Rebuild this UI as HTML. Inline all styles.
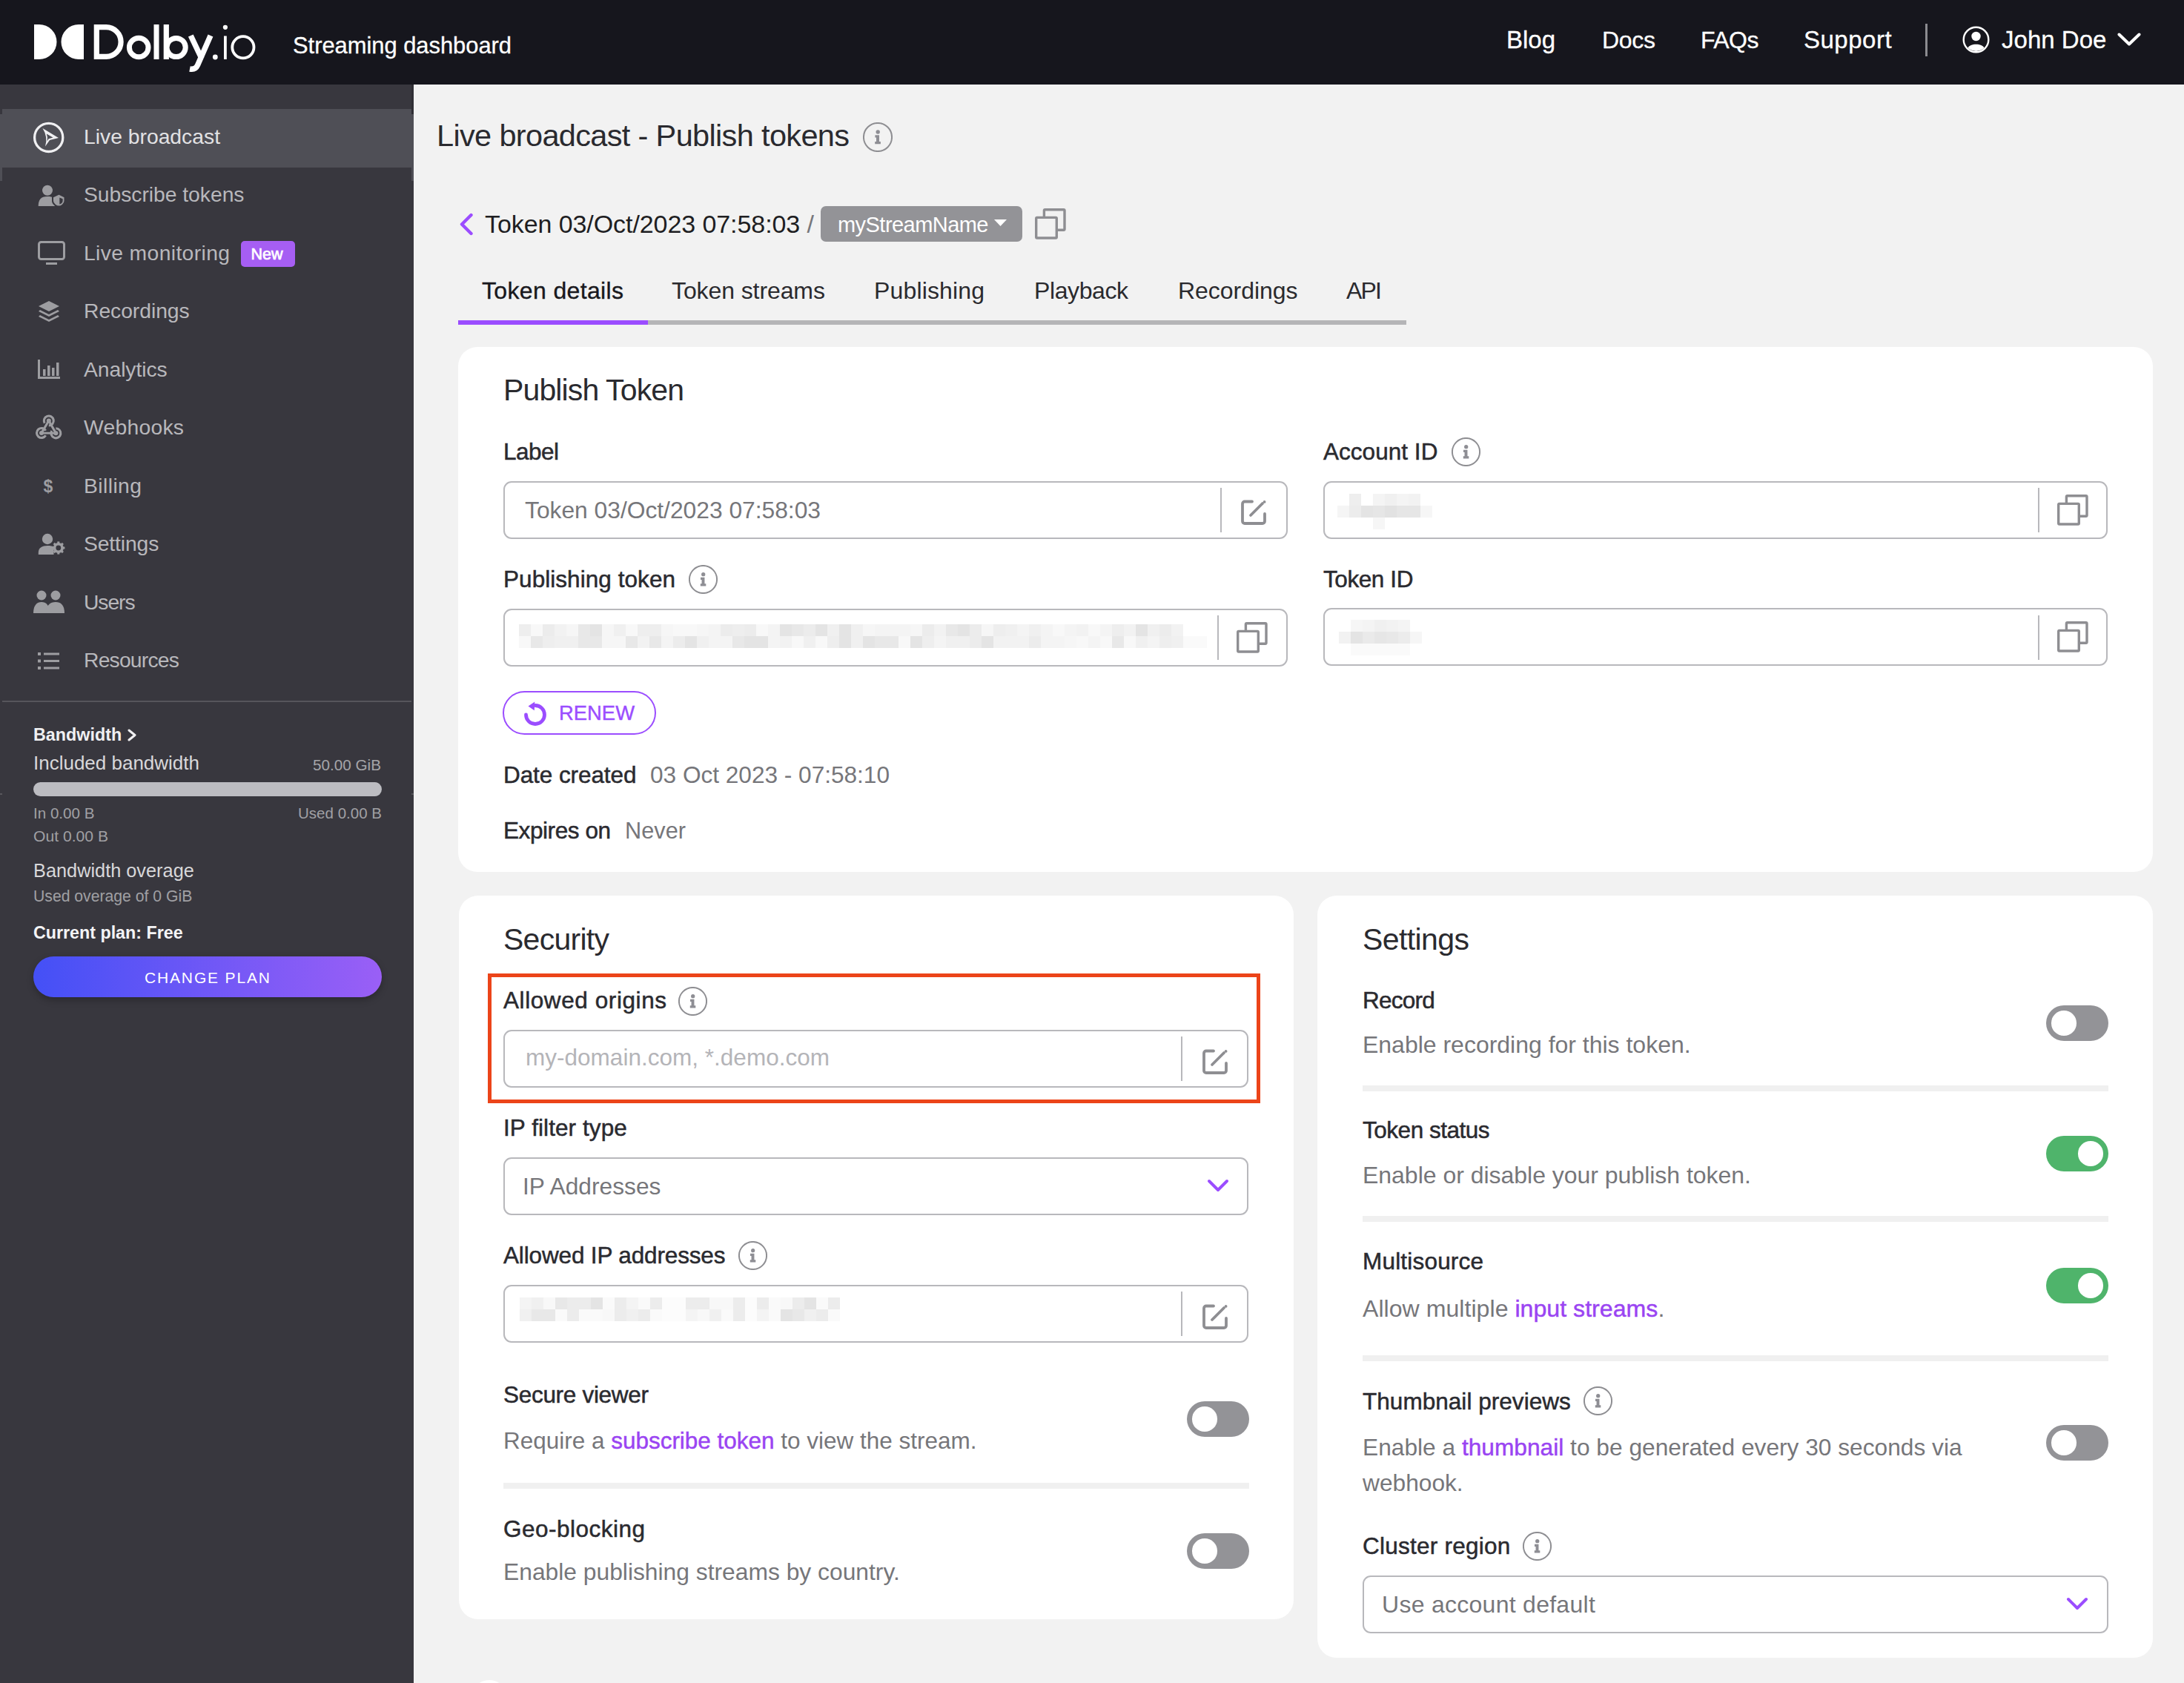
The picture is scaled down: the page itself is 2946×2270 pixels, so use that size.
<!DOCTYPE html>
<html><head><meta charset="utf-8"><title>Dolby.io Streaming dashboard</title>
<style>
html,body{margin:0;padding:0;width:2946px;height:2270px;overflow:hidden;background:#f2f2f2}
body{position:relative;font-family:"Liberation Sans",sans-serif}
body>div{position:absolute}
.t{line-height:1;white-space:pre}
</style></head><body>
<div style="left:0px;top:0px;width:2946px;height:114px;background:#16161d"></div>
<svg style="position:absolute;left:0px;top:0px" width="360" height="114" viewBox="0 0 360 114"><g fill="#fff"><path d="M46 33 H53 A23.5 23.5 0 0 1 53 80 H46 Z"/><path d="M113 33 H106 A23.5 23.5 0 0 0 106 80 H113 Z"/><rect x="207.5" y="33" width="7" height="47"/><rect x="220.7" y="33" width="7.2" height="47"/><circle cx="290.3" cy="77" r="3.4"/><rect x="302" y="48.5" width="3.8" height="31.5"/><circle cx="303.9" cy="36.8" r="3.1"/></g><g fill="none" stroke="#fff"><path d="M130.3 36.6 H143.2 A19.9 19.9 0 0 1 143.2 76.4 H130.3 Z" stroke-width="7.2"/><circle cx="187.2" cy="64" r="12.8" stroke-width="7"/><circle cx="237.6" cy="64" r="12.6" stroke-width="7"/><path d="M257.3 48 L272 79" stroke-width="7.4"/><path d="M284 48 L266.5 88 Q263.5 94.5 256 93" stroke-width="7.4"/><circle cx="327.9" cy="63.8" r="14.6" stroke-width="3.8"/></g></svg>
<div class="t" style="left:395px;top:46.64px;font-size:30.9px;color:#fff;font-weight:400;letter-spacing:-0.021px;-webkit-text-stroke:0.3px #fff">Streaming dashboard</div>
<div class="t" style="left:2032px;top:37.17px;font-size:33px;color:#fff;font-weight:400;letter-spacing:-0.021px;-webkit-text-stroke:0.3px #fff">Blog</div>
<div class="t" style="left:2161px;top:38.01px;font-size:32px;color:#fff;font-weight:400;letter-spacing:-0.302px;-webkit-text-stroke:0.3px #fff">Docs</div>
<div class="t" style="left:2294px;top:38.01px;font-size:32px;color:#fff;font-weight:400;letter-spacing:-0.539px;-webkit-text-stroke:0.3px #fff">FAQs</div>
<div class="t" style="left:2433px;top:37.17px;font-size:33px;color:#fff;font-weight:400;letter-spacing:0.501px;-webkit-text-stroke:0.3px #fff">Support</div>
<div style="left:2597px;top:32px;width:3px;height:44px;background:#8b8b90"></div>
<svg style="position:absolute;left:2647px;top:35px" width="37" height="37" viewBox="0 0 37 37"><circle cx="18.5" cy="18.5" r="16.8" fill="none" stroke="#fff" stroke-width="2.4"/><circle cx="18.5" cy="14" r="6.2" fill="#fff"/><path d="M7.5 29.5 C10 23 27 23 29.5 29.5 A16 16 0 0 1 7.5 29.5Z" fill="#fff"/></svg>
<div class="t" style="left:2700px;top:37.17px;font-size:33px;color:#fff;font-weight:400;letter-spacing:0.019px;-webkit-text-stroke:0.3px #fff">John Doe</div>
<svg style="position:absolute;left:2856px;top:44px" width="32" height="19" viewBox="0 0 32 19"><path d="M2.5 2.5 L16 15.5 L29.5 2.5" fill="none" stroke="#fff" stroke-width="4" stroke-linecap="round" stroke-linejoin="round"/></svg>
<div style="left:0px;top:114px;width:558px;height:2156px;background:#38373e"></div>
<div style="left:3px;top:147px;width:552px;height:79px;background:#4f4f56"></div>
<div style="left:0px;top:154px;width:3px;height:89.5px;background:#4f4f56"></div>
<div style="left:555px;top:154px;width:3px;height:89.5px;background:#4f4f56"></div>
<div style="left:555px;top:114px;width:3px;height:40px;background:#302f35"></div>
<div style="left:0px;top:1070px;width:3px;height:2px;background:#58575c"></div>
<div style="left:555px;top:1070px;width:3px;height:2px;background:#58575c"></div>
<div class="t" style="left:113px;top:169.84px;font-size:28.3px;color:#e2e2e4;font-weight:400;letter-spacing:-0.004px;">Live broadcast</div>
<div class="t" style="left:113px;top:248.34px;font-size:28.3px;color:#b8b8bc;font-weight:400;letter-spacing:-0.039px;">Subscribe tokens</div>
<div class="t" style="left:113px;top:326.84px;font-size:28.3px;color:#b8b8bc;font-weight:400;letter-spacing:0.365px;">Live monitoring</div>
<div class="t" style="left:113px;top:405.34px;font-size:28.3px;color:#b8b8bc;font-weight:400;letter-spacing:-0.049px;">Recordings</div>
<div class="t" style="left:113px;top:483.84px;font-size:28.3px;color:#b8b8bc;font-weight:400;letter-spacing:-0.067px;">Analytics</div>
<div class="t" style="left:113px;top:562.34px;font-size:28.3px;color:#b8b8bc;font-weight:400;letter-spacing:0.259px;">Webhooks</div>
<div class="t" style="left:113px;top:640.84px;font-size:28.3px;color:#b8b8bc;font-weight:400;letter-spacing:0.417px;">Billing</div>
<div class="t" style="left:113px;top:719.34px;font-size:28.3px;color:#b8b8bc;font-weight:400;letter-spacing:-0.136px;">Settings</div>
<div class="t" style="left:113px;top:797.84px;font-size:28.3px;color:#b8b8bc;font-weight:400;letter-spacing:-1.077px;">Users</div>
<div class="t" style="left:113px;top:876.34px;font-size:28.3px;color:#b8b8bc;font-weight:400;letter-spacing:-0.796px;">Resources</div>
<div style="left:325px;top:324.5px;width:73px;height:35.5px;background:#a65ef3;border-radius:5px"></div>
<div class="t" style="left:338.5px;top:332.60px;font-size:21.5px;color:#fff;font-weight:400;letter-spacing:-0.008px;-webkit-text-stroke:0.7px #fff">New</div>
<svg style="position:absolute;left:44px;top:163px" width="44" height="44" viewBox="0 0 44 44"><circle cx="21.7" cy="22.4" r="19.1" fill="none" stroke="#f0f0f2" stroke-width="3.3"/><path d="M13.5 10 L35 23 L23 26 L17 34.5 Q21 22 13.5 10 Z" fill="#f0f0f2"/><path d="M18.8 17.5 L27.5 22.6 L21.5 24.2 L19.6 27.5 Q20.8 22 18.8 17.5 Z" fill="#505057"/></svg>
<svg style="position:absolute;left:44px;top:240px" width="48" height="48" viewBox="0 0 48 48"><circle cx="20" cy="16.8" r="7" fill="#9d9da1"/><path d="M7.7 38 C7.7 29.5 11 25 20 25 C24 25 26.5 25.6 28 26.5 L30 38 Z" fill="#9d9da1"/><path d="M27 25.5 L35.5 21.6 L43.5 25.5 V31 C43.5 35.5 38.5 38.5 35.5 38.5 C32.5 38.5 27 35.5 27 31 Z" fill="#9d9da1" stroke="#38373e" stroke-width="2"/><path d="M36.3 26.6 L40.6 28.3 V31 C40.6 33.5 38.3 35.2 36.3 35.5 Z" fill="#38373e"/></svg>
<svg style="position:absolute;left:51px;top:325px" width="37" height="33" viewBox="0 0 37 33"><rect x="1.5" y="1.5" width="34" height="23" rx="3" fill="none" stroke="#9d9da1" stroke-width="3"/><rect x="11" y="29" width="15" height="3" fill="#9d9da1"/></svg>
<svg style="position:absolute;left:51px;top:405px" width="30" height="32" viewBox="0 0 30 32"><path d="M15 1 L29 8 L15 15 L1 8 Z" fill="#9d9da1"/><path d="M3 13 L15 19 L27 13 L29 15 L15 22 L1 15 Z" fill="#9d9da1"/><path d="M3 20 L15 26 L27 20 L29 22 L15 29 L1 22 Z" fill="#9d9da1"/></svg>
<svg style="position:absolute;left:51px;top:485px" width="30" height="26" viewBox="0 0 30 26"><path d="M1.5 0 V24.5 H30" fill="none" stroke="#9d9da1" stroke-width="3"/><rect x="7" y="13" width="3.5" height="9" fill="#9d9da1"/><rect x="13" y="8" width="3.5" height="14" fill="#9d9da1"/><rect x="19" y="11" width="3.5" height="11" fill="#9d9da1"/><rect x="25" y="4" width="3.5" height="18" fill="#9d9da1"/></svg>
<svg style="position:absolute;left:42px;top:552px" width="50" height="50" viewBox="0 0 50 50"><g fill="none" stroke="#9d9da1" stroke-width="3.1"><path d="M18.17 18.75 A6.5 6.5 0 1 1 23.8 22"/><path d="M19.63 35.25 A6.5 6.5 0 1 1 19.63 28.75"/><path d="M33.4 25.8 A6.5 6.5 0 1 1 27.77 29.05"/><path d="M23.8 15.5 L14 32 L33.4 32.3 Z" stroke-linejoin="round"/></g><g fill="#9d9da1"><circle cx="23.8" cy="15.5" r="3"/><circle cx="14" cy="32" r="3"/><circle cx="33.4" cy="32.3" r="3"/></g></svg>
<div class="t" style="left:58.5px;top:645.33px;font-size:23px;color:#9d9da1;font-weight:700;">$</div>
<svg style="position:absolute;left:50px;top:718px" width="40" height="32" viewBox="0 0 40 32"><circle cx="14" cy="9" r="7.2" fill="#9d9da1"/><path d="M1.8 30 V27 C1.8 21 7 18 14 18 C18 18 21 18.5 22.5 19.5 V30 Z" fill="#9d9da1"/><g transform="translate(28.8 21)"><circle r="5.2" fill="none" stroke="#9d9da1" stroke-width="3.6"/><g stroke="#9d9da1" stroke-width="3" stroke-linecap="butt"><path d="M0 -8.6 V-5"/><path d="M0 8.6 V5"/><path d="M-8.6 0 H-5"/><path d="M8.6 0 H5"/><path d="M-6.1 -6.1 L-3.5 -3.5"/><path d="M6.1 6.1 L3.5 3.5"/><path d="M-6.1 6.1 L-3.5 3.5"/><path d="M6.1 -6.1 L3.5 -3.5"/></g></g></svg>
<svg style="position:absolute;left:45px;top:796px" width="42" height="31" viewBox="0 0 42 31"><circle cx="11" cy="7" r="6.5" fill="#9d9da1"/><circle cx="30" cy="7" r="6.5" fill="#9d9da1"/><path d="M0 31 C0 20 5 16 11 16 C17 16 22 20 22 31 Z" fill="#9d9da1"/><path d="M17 31 C17 20 23 16 30 16 C37 16 42 20 42 31 Z" fill="#9d9da1"/></svg>
<svg style="position:absolute;left:51px;top:880px" width="29" height="23" viewBox="0 0 29 23"><g fill="#9d9da1"><rect x="0" y="0" width="4" height="4"/><rect x="0" y="9.5" width="4" height="4"/><rect x="0" y="19" width="4" height="4"/><rect x="8" y="0.5" width="21" height="3"/><rect x="8" y="10" width="21" height="3"/><rect x="8" y="19.5" width="21" height="3"/></g></svg>
<div style="left:3px;top:944.5px;width:552px;height:2px;background:#56555b"></div>
<div class="t" style="left:45px;top:980.08px;font-size:23.3px;color:#f0f0f2;font-weight:700;letter-spacing:0.017px;">Bandwidth</div>
<svg style="position:absolute;left:172px;top:983px" width="12" height="17" viewBox="0 0 12 17"><path d="M2 2 L10 8.5 L2 15" fill="none" stroke="#f0f0f2" stroke-width="3" stroke-linecap="round" stroke-linejoin="round"/></svg>
<div class="t" style="left:45px;top:1016.29px;font-size:26px;color:#d8d8da;font-weight:400;letter-spacing:-0.004px;">Included bandwidth</div>
<div class="t" style="left:422px;top:1022.28px;font-size:20.7px;color:#a5a5a9;font-weight:400;letter-spacing:-0.002px;">50.00 GiB</div>
<div style="left:45px;top:1055px;width:470px;height:19px;background:#bcbcc1;border-radius:10px"></div>
<div class="t" style="left:45px;top:1086.86px;font-size:20.6px;color:#a0a0a4;font-weight:400;letter-spacing:-0.005px;">In 0.00 B</div>
<div class="t" style="left:402px;top:1086.95px;font-size:20.5px;color:#a0a0a4;font-weight:400;letter-spacing:0.017px;">Used 0.00 B</div>
<div class="t" style="left:45px;top:1117.44px;font-size:21.1px;color:#a0a0a4;font-weight:400;letter-spacing:0.016px;">Out 0.00 B</div>
<div class="t" style="left:45px;top:1162.38px;font-size:25.3px;color:#d8d8da;font-weight:400;letter-spacing:0.013px;">Bandwidth overage</div>
<div class="t" style="left:45px;top:1198.35px;font-size:21.2px;color:#a0a0a4;font-weight:400;letter-spacing:-0.003px;">Used overage of 0 GiB</div>
<div class="t" style="left:45px;top:1246.58px;font-size:23.3px;color:#f4f4f6;font-weight:700;letter-spacing:-0.020px;">Current plan: Free</div>
<div style="left:45px;top:1290px;width:470px;height:55px;background:linear-gradient(90deg,#4450f6,#9a5ff6);border-radius:28px;box-shadow:0 4px 10px rgba(0,0,0,0.25)"></div>
<div class="t" style="left:195px;top:1308.02px;font-size:21px;color:#fff;font-weight:400;letter-spacing:1.845px;">CHANGE PLAN</div>
<div style="left:558px;top:114px;width:2388px;height:2156px;background:#f2f2f2"></div>
<div class="t" style="left:589px;top:162.27px;font-size:41.5px;color:#2a2a2f;font-weight:400;letter-spacing:-0.657px;">Live broadcast - Publish tokens</div>
<svg style="position:absolute;left:1164px;top:164.5px" width="40" height="40" viewBox="0 0 40 40"><circle cx="20.0" cy="20.0" r="19.05" fill="none" stroke="#8e8e92" stroke-width="2.0"/><circle cx="20.2" cy="13.0" r="2.7" fill="#8e8e94"/><path d="M16.4 17.3 H22.0 V26.0 H23.9 V29.3 H16.2 V26.0 H18.0 V20.6 H16.4 Z" fill="#8e8e94"/></svg>
<svg style="position:absolute;left:619px;top:287px" width="20" height="31" viewBox="0 0 20 31"><path d="M16.5 3 L4 15.5 L16.5 28" fill="none" stroke="#9b4dff" stroke-width="4.4" stroke-linecap="round" stroke-linejoin="round"/></svg>
<div class="t" style="left:654px;top:284.82px;font-size:34px;color:#1e1e22;font-weight:400;letter-spacing:-0.078px;">Token 03/Oct/2023 07:58:03 <span style="color:#77777b">/</span></div>
<div style="left:1107px;top:278px;width:272px;height:48px;background:#939397;border-radius:7px"></div>
<div class="t" style="left:1130px;top:289.25px;font-size:29px;color:#fff;font-weight:400;letter-spacing:-0.545px;">myStreamName</div>
<svg style="position:absolute;left:1341px;top:296px" width="17" height="10" viewBox="0 0 17 10"><path d="M0 0 H17 L8.5 9 Z" fill="#fff"/></svg>
<svg style="position:absolute;left:1396px;top:281px" width="42" height="42" viewBox="0 0 42 42"><g stroke="#8e8e92" stroke-width="3.4"><rect x="12.4" y="1.7" width="27.6" height="27.6" rx="1.2" fill="none"/><rect x="1.7" y="12.4" width="27.6" height="27.6" rx="1.2" fill="#f2f2f2"/></g></svg>
<div class="t" style="left:650px;top:375.61px;font-size:32px;color:#18181d;font-weight:400;letter-spacing:0.352px;-webkit-text-stroke:0.35px #18181d">Token details</div>
<div class="t" style="left:906px;top:375.61px;font-size:32px;color:#2a2a2e;font-weight:400;letter-spacing:-0.098px;">Token streams</div>
<div class="t" style="left:1179px;top:375.61px;font-size:32px;color:#2a2a2e;font-weight:400;letter-spacing:0.149px;">Publishing</div>
<div class="t" style="left:1395px;top:375.61px;font-size:32px;color:#2a2a2e;font-weight:400;letter-spacing:-0.406px;">Playback</div>
<div class="t" style="left:1589px;top:375.61px;font-size:32px;color:#2a2a2e;font-weight:400;letter-spacing:-0.040px;">Recordings</div>
<div class="t" style="left:1816px;top:375.61px;font-size:32px;color:#2a2a2e;font-weight:400;letter-spacing:-1.789px;">API</div>
<div style="left:618px;top:432px;width:1279px;height:6px;background:#b5b5b7"></div>
<div style="left:618px;top:432px;width:256px;height:6px;background:#9b4dff"></div>
<div style="left:618px;top:468px;width:2286px;height:708px;background:#fff;border-radius:26px"></div>
<div class="t" style="left:679px;top:505.79px;font-size:41px;color:#2a2a2f;font-weight:400;letter-spacing:-0.878px;">Publish Token</div>
<div class="t" style="left:679px;top:594.14px;font-size:31.5px;color:#2a2a2f;font-weight:400;letter-spacing:-0.520px;-webkit-text-stroke:0.5px #2a2a2f">Label</div>
<div style="left:679px;top:649px;width:1058px;height:78px;border:2px solid #b8b8bc;border-radius:11px;box-sizing:border-box;background:#fff"></div>
<div class="t" style="left:708px;top:672.88px;font-size:31.8px;color:#76767a;font-weight:400;letter-spacing:-0.021px;">Token 03/Oct/2023 07:58:03</div>
<div style="left:1646px;top:658px;width:2px;height:60px;background:#b8b8bc"></div>
<svg style="position:absolute;left:1674px;top:674px" width="34" height="34" viewBox="0 0 34 34"><path d="M15.0 2.5 H5.0 A3.0 3.0 0 0 0 2.0 5.5 V29.0 A3.0 3.0 0 0 0 5.0 32.0 H29.0 A3.0 3.0 0 0 0 32.0 29.0 V19.0" fill="none" stroke="#8e8e92" stroke-width="3.8" stroke-linecap="round"/><path d="M13.0 21.0 L29.0 5.0" stroke="#8e8e92" stroke-width="3.8" stroke-linecap="round"/><circle cx="31.6" cy="2.9" r="1.9" fill="#8e8e92"/></svg>
<div class="t" style="left:679px;top:765.64px;font-size:31.5px;color:#2a2a2f;font-weight:400;letter-spacing:0.055px;-webkit-text-stroke:0.5px #2a2a2f">Publishing token</div>
<svg style="position:absolute;left:929px;top:762px" width="39" height="39" viewBox="0 0 39 39"><circle cx="19.5" cy="19.5" r="18.57375" fill="none" stroke="#8e8e92" stroke-width="1.95"/><circle cx="19.695" cy="12.674999999999999" r="2.6325000000000003" fill="#8e8e94"/><path d="M15.989999999999998 16.8675 H21.45 V25.349999999999998 H23.3025 V28.5675 H15.794999999999998 V25.349999999999998 H17.55 V20.085 H15.989999999999998 Z" fill="#8e8e94"/></svg>
<div style="left:679px;top:821px;width:1058px;height:78px;border:2px solid #b8b8bc;border-radius:11px;box-sizing:border-box;background:#fff"></div>
<div style="left:1642px;top:830px;width:2px;height:60px;background:#b8b8bc"></div>
<svg style="position:absolute;left:1668px;top:839px" width="42" height="42" viewBox="0 0 42 42"><g stroke="#8e8e92" stroke-width="3.4"><rect x="12.4" y="1.7" width="27.6" height="27.6" rx="1.2" fill="none"/><rect x="1.7" y="12.4" width="27.6" height="27.6" rx="1.2" fill="#fff"/></g></svg>
<svg style="position:absolute;left:700px;top:842px" width="928" height="32" viewBox="0 0 928 32"><rect x="0" y="0" width="16" height="16" fill="rgb(238,238,238)"/><rect x="16" y="0" width="16" height="16" fill="rgb(248,248,248)"/><rect x="32" y="0" width="16" height="16" fill="rgb(236,236,236)"/><rect x="48" y="0" width="16" height="16" fill="rgb(242,242,242)"/><rect x="64" y="0" width="16" height="16" fill="rgb(246,246,246)"/><rect x="80" y="0" width="16" height="16" fill="rgb(232,232,232)"/><rect x="96" y="0" width="16" height="16" fill="rgb(228,228,228)"/><rect x="112" y="0" width="16" height="16" fill="rgb(246,246,246)"/><rect x="128" y="0" width="16" height="16" fill="rgb(240,240,240)"/><rect x="144" y="0" width="16" height="16" fill="rgb(248,248,248)"/><rect x="160" y="0" width="16" height="16" fill="rgb(238,238,238)"/><rect x="176" y="0" width="16" height="16" fill="rgb(238,238,238)"/><rect x="192" y="0" width="16" height="16" fill="rgb(246,246,246)"/><rect x="208" y="0" width="16" height="16" fill="rgb(248,248,248)"/><rect x="224" y="0" width="16" height="16" fill="rgb(248,248,248)"/><rect x="240" y="0" width="16" height="16" fill="rgb(246,246,246)"/><rect x="256" y="0" width="16" height="16" fill="rgb(244,244,244)"/><rect x="272" y="0" width="16" height="16" fill="rgb(236,236,236)"/><rect x="288" y="0" width="16" height="16" fill="rgb(238,238,238)"/><rect x="304" y="0" width="16" height="16" fill="rgb(236,236,236)"/><rect x="320" y="0" width="16" height="16" fill="rgb(248,248,248)"/><rect x="336" y="0" width="16" height="16" fill="rgb(244,244,244)"/><rect x="352" y="0" width="16" height="16" fill="rgb(228,228,228)"/><rect x="368" y="0" width="16" height="16" fill="rgb(232,232,232)"/><rect x="384" y="0" width="16" height="16" fill="rgb(236,236,236)"/><rect x="400" y="0" width="16" height="16" fill="rgb(228,228,228)"/><rect x="416" y="0" width="16" height="16" fill="rgb(240,240,240)"/><rect x="432" y="0" width="16" height="16" fill="rgb(228,228,228)"/><rect x="448" y="0" width="16" height="16" fill="rgb(240,240,240)"/><rect x="464" y="0" width="16" height="16" fill="rgb(246,246,246)"/><rect x="480" y="0" width="16" height="16" fill="rgb(244,244,244)"/><rect x="496" y="0" width="16" height="16" fill="rgb(244,244,244)"/><rect x="512" y="0" width="16" height="16" fill="rgb(244,244,244)"/><rect x="528" y="0" width="16" height="16" fill="rgb(246,246,246)"/><rect x="544" y="0" width="16" height="16" fill="rgb(236,236,236)"/><rect x="560" y="0" width="16" height="16" fill="rgb(242,242,242)"/><rect x="576" y="0" width="16" height="16" fill="rgb(232,232,232)"/><rect x="592" y="0" width="16" height="16" fill="rgb(228,228,228)"/><rect x="608" y="0" width="16" height="16" fill="rgb(236,236,236)"/><rect x="624" y="0" width="16" height="16" fill="rgb(246,246,246)"/><rect x="640" y="0" width="16" height="16" fill="rgb(238,238,238)"/><rect x="656" y="0" width="16" height="16" fill="rgb(240,240,240)"/><rect x="672" y="0" width="16" height="16" fill="rgb(244,244,244)"/><rect x="688" y="0" width="16" height="16" fill="rgb(240,240,240)"/><rect x="704" y="0" width="16" height="16" fill="rgb(244,244,244)"/><rect x="720" y="0" width="16" height="16" fill="rgb(248,248,248)"/><rect x="736" y="0" width="16" height="16" fill="rgb(244,244,244)"/><rect x="752" y="0" width="16" height="16" fill="rgb(242,242,242)"/><rect x="768" y="0" width="16" height="16" fill="rgb(248,248,248)"/><rect x="784" y="0" width="16" height="16" fill="rgb(244,244,244)"/><rect x="800" y="0" width="16" height="16" fill="rgb(238,238,238)"/><rect x="816" y="0" width="16" height="16" fill="rgb(242,242,242)"/><rect x="832" y="0" width="16" height="16" fill="rgb(228,228,228)"/><rect x="848" y="0" width="16" height="16" fill="rgb(240,240,240)"/><rect x="864" y="0" width="16" height="16" fill="rgb(236,236,236)"/><rect x="880" y="0" width="16" height="16" fill="rgb(242,242,242)"/><rect x="0" y="16" width="16" height="16" fill="rgb(248,248,248)"/><rect x="16" y="16" width="16" height="16" fill="rgb(232,232,232)"/><rect x="32" y="16" width="16" height="16" fill="rgb(238,238,238)"/><rect x="48" y="16" width="16" height="16" fill="rgb(240,240,240)"/><rect x="64" y="16" width="16" height="16" fill="rgb(240,240,240)"/><rect x="80" y="16" width="16" height="16" fill="rgb(232,232,232)"/><rect x="96" y="16" width="16" height="16" fill="rgb(232,232,232)"/><rect x="112" y="16" width="16" height="16" fill="rgb(246,246,246)"/><rect x="128" y="16" width="16" height="16" fill="rgb(246,246,246)"/><rect x="144" y="16" width="16" height="16" fill="rgb(232,232,232)"/><rect x="160" y="16" width="16" height="16" fill="rgb(242,242,242)"/><rect x="176" y="16" width="16" height="16" fill="rgb(232,232,232)"/><rect x="192" y="16" width="16" height="16" fill="rgb(244,244,244)"/><rect x="208" y="16" width="16" height="16" fill="rgb(236,236,236)"/><rect x="224" y="16" width="16" height="16" fill="rgb(228,228,228)"/><rect x="240" y="16" width="16" height="16" fill="rgb(240,240,240)"/><rect x="256" y="16" width="16" height="16" fill="rgb(244,244,244)"/><rect x="272" y="16" width="16" height="16" fill="rgb(244,244,244)"/><rect x="288" y="16" width="16" height="16" fill="rgb(232,232,232)"/><rect x="304" y="16" width="16" height="16" fill="rgb(228,228,228)"/><rect x="320" y="16" width="16" height="16" fill="rgb(228,228,228)"/><rect x="336" y="16" width="16" height="16" fill="rgb(244,244,244)"/><rect x="352" y="16" width="16" height="16" fill="rgb(242,242,242)"/><rect x="368" y="16" width="16" height="16" fill="rgb(248,248,248)"/><rect x="384" y="16" width="16" height="16" fill="rgb(240,240,240)"/><rect x="400" y="16" width="16" height="16" fill="rgb(248,248,248)"/><rect x="416" y="16" width="16" height="16" fill="rgb(238,238,238)"/><rect x="432" y="16" width="16" height="16" fill="rgb(228,228,228)"/><rect x="448" y="16" width="16" height="16" fill="rgb(240,240,240)"/><rect x="464" y="16" width="16" height="16" fill="rgb(228,228,228)"/><rect x="480" y="16" width="16" height="16" fill="rgb(232,232,232)"/><rect x="496" y="16" width="16" height="16" fill="rgb(232,232,232)"/><rect x="512" y="16" width="16" height="16" fill="rgb(248,248,248)"/><rect x="528" y="16" width="16" height="16" fill="rgb(228,228,228)"/><rect x="544" y="16" width="16" height="16" fill="rgb(238,238,238)"/><rect x="560" y="16" width="16" height="16" fill="rgb(244,244,244)"/><rect x="576" y="16" width="16" height="16" fill="rgb(240,240,240)"/><rect x="592" y="16" width="16" height="16" fill="rgb(240,240,240)"/><rect x="608" y="16" width="16" height="16" fill="rgb(236,236,236)"/><rect x="624" y="16" width="16" height="16" fill="rgb(228,228,228)"/><rect x="640" y="16" width="16" height="16" fill="rgb(242,242,242)"/><rect x="656" y="16" width="16" height="16" fill="rgb(242,242,242)"/><rect x="672" y="16" width="16" height="16" fill="rgb(242,242,242)"/><rect x="688" y="16" width="16" height="16" fill="rgb(236,236,236)"/><rect x="704" y="16" width="16" height="16" fill="rgb(244,244,244)"/><rect x="720" y="16" width="16" height="16" fill="rgb(244,244,244)"/><rect x="736" y="16" width="16" height="16" fill="rgb(246,246,246)"/><rect x="752" y="16" width="16" height="16" fill="rgb(248,248,248)"/><rect x="768" y="16" width="16" height="16" fill="rgb(244,244,244)"/><rect x="784" y="16" width="16" height="16" fill="rgb(248,248,248)"/><rect x="800" y="16" width="16" height="16" fill="rgb(232,232,232)"/><rect x="816" y="16" width="16" height="16" fill="rgb(248,248,248)"/><rect x="832" y="16" width="16" height="16" fill="rgb(240,240,240)"/><rect x="848" y="16" width="16" height="16" fill="rgb(244,244,244)"/><rect x="864" y="16" width="16" height="16" fill="rgb(238,238,238)"/><rect x="880" y="16" width="16" height="16" fill="rgb(240,240,240)"/><rect x="896" y="16" width="16" height="16" fill="rgb(250,250,250)"/><rect x="912" y="16" width="16" height="16" fill="rgb(250,250,250)"/></svg>
<div class="t" style="left:1785px;top:594.14px;font-size:31.5px;color:#2a2a2f;font-weight:400;letter-spacing:0.036px;-webkit-text-stroke:0.5px #2a2a2f">Account ID</div>
<svg style="position:absolute;left:1958px;top:590px" width="39" height="39" viewBox="0 0 39 39"><circle cx="19.5" cy="19.5" r="18.57375" fill="none" stroke="#8e8e92" stroke-width="1.95"/><circle cx="19.695" cy="12.674999999999999" r="2.6325000000000003" fill="#8e8e94"/><path d="M15.989999999999998 16.8675 H21.45 V25.349999999999998 H23.3025 V28.5675 H15.794999999999998 V25.349999999999998 H17.55 V20.085 H15.989999999999998 Z" fill="#8e8e94"/></svg>
<div style="left:1785px;top:649px;width:1058px;height:78px;border:2px solid #b8b8bc;border-radius:11px;box-sizing:border-box;background:#fff"></div>
<div style="left:2748.5px;top:658px;width:2px;height:60px;background:#b8b8bc"></div>
<svg style="position:absolute;left:2775px;top:667px" width="42" height="42" viewBox="0 0 42 42"><g stroke="#8e8e92" stroke-width="3.4"><rect x="12.4" y="1.7" width="27.6" height="27.6" rx="1.2" fill="none"/><rect x="1.7" y="12.4" width="27.6" height="27.6" rx="1.2" fill="#fff"/></g></svg>
<svg style="position:absolute;left:1804px;top:666px" width="128" height="48" viewBox="0 0 128 48"><rect x="0" y="16" width="16" height="16" fill="rgb(245,245,245)"/><rect x="16" y="0" width="16" height="16" fill="rgb(238,238,238)"/><rect x="16" y="16" width="16" height="16" fill="rgb(236,236,236)"/><rect x="32" y="16" width="16" height="16" fill="rgb(228,228,228)"/><rect x="48" y="0" width="16" height="16" fill="rgb(244,244,244)"/><rect x="48" y="16" width="16" height="16" fill="rgb(230,230,230)"/><rect x="64" y="0" width="16" height="16" fill="rgb(240,240,240)"/><rect x="64" y="16" width="16" height="16" fill="rgb(226,226,226)"/><rect x="80" y="0" width="16" height="16" fill="rgb(244,244,244)"/><rect x="80" y="16" width="16" height="16" fill="rgb(230,230,230)"/><rect x="96" y="0" width="16" height="16" fill="rgb(242,242,242)"/><rect x="96" y="16" width="16" height="16" fill="rgb(230,230,230)"/><rect x="112" y="16" width="16" height="16" fill="rgb(246,246,246)"/><rect x="48" y="32" width="16" height="16" fill="rgb(246,246,246)"/></svg>
<div class="t" style="left:1785px;top:766.14px;font-size:31.5px;color:#2a2a2f;font-weight:400;letter-spacing:-0.416px;-webkit-text-stroke:0.5px #2a2a2f">Token ID</div>
<div style="left:1785px;top:820px;width:1058px;height:78px;border:2px solid #b8b8bc;border-radius:11px;box-sizing:border-box;background:#fff"></div>
<div style="left:2748.5px;top:830px;width:2px;height:60px;background:#b8b8bc"></div>
<svg style="position:absolute;left:2775px;top:838px" width="42" height="42" viewBox="0 0 42 42"><g stroke="#8e8e92" stroke-width="3.4"><rect x="12.4" y="1.7" width="27.6" height="27.6" rx="1.2" fill="none"/><rect x="1.7" y="12.4" width="27.6" height="27.6" rx="1.2" fill="#fff"/></g></svg>
<svg style="position:absolute;left:1806px;top:836px" width="128" height="48" viewBox="0 0 128 48"><rect x="16" y="0" width="16" height="16" fill="rgb(246,246,246)"/><rect x="32" y="0" width="16" height="16" fill="rgb(244,244,244)"/><rect x="48" y="0" width="16" height="16" fill="rgb(240,240,240)"/><rect x="64" y="0" width="16" height="16" fill="rgb(242,242,242)"/><rect x="80" y="0" width="16" height="16" fill="rgb(244,244,244)"/><rect x="0" y="16" width="16" height="16" fill="rgb(242,242,242)"/><rect x="16" y="16" width="16" height="16" fill="rgb(228,228,228)"/><rect x="32" y="16" width="16" height="16" fill="rgb(234,234,234)"/><rect x="48" y="16" width="16" height="16" fill="rgb(230,230,230)"/><rect x="64" y="16" width="16" height="16" fill="rgb(232,232,232)"/><rect x="80" y="16" width="16" height="16" fill="rgb(236,236,236)"/><rect x="96" y="16" width="16" height="16" fill="rgb(246,246,246)"/><rect x="16" y="32" width="16" height="16" fill="rgb(250,250,250)"/><rect x="32" y="32" width="16" height="16" fill="rgb(250,250,250)"/><rect x="48" y="32" width="16" height="16" fill="rgb(250,250,250)"/><rect x="64" y="32" width="16" height="16" fill="rgb(250,250,250)"/><rect x="80" y="32" width="16" height="16" fill="rgb(250,250,250)"/></svg>
<div style="left:678px;top:932px;width:207px;height:59px;border:2.5px solid #9b4dff;border-radius:30px;box-sizing:border-box"></div>
<svg style="position:absolute;left:700px;top:940px" width="40" height="40" viewBox="0 0 40 40"><path d="M9.5 24 A12.5 12.5 0 1 0 22 11.5" fill="none" stroke="#9b4dff" stroke-width="4.8" stroke-linecap="round"/><path d="M12.5 12.6 L21.3 6.5 L20.8 18.2 Z" fill="#9b4dff"/></svg>
<div class="t" style="left:754px;top:948.11px;font-size:27.4px;color:#9b4dff;font-weight:400;letter-spacing:0.012px;-webkit-text-stroke:0.4px #9b4dff">RENEW</div>
<div class="t" style="left:679px;top:1030.14px;font-size:31.5px;color:#2a2a2f;font-weight:400;letter-spacing:-0.078px;-webkit-text-stroke:0.5px #2a2a2f">Date created</div>
<div class="t" style="left:877px;top:1030.05px;font-size:31.6px;color:#76767a;font-weight:400;letter-spacing:-0.010px;">03 Oct 2023 - 07:58:10</div>
<div class="t" style="left:679px;top:1105.14px;font-size:31.5px;color:#2a2a2f;font-weight:400;letter-spacing:-0.425px;-webkit-text-stroke:0.5px #2a2a2f">Expires on</div>
<div class="t" style="left:843px;top:1105.81px;font-size:30.7px;color:#76767a;font-weight:400;letter-spacing:0.035px;">Never</div>
<div style="left:619px;top:1208px;width:1126px;height:976px;background:#fff;border-radius:26px"></div>
<div class="t" style="left:679px;top:1246.79px;font-size:41px;color:#2a2a2f;font-weight:400;letter-spacing:-0.744px;">Security</div>
<div style="left:658px;top:1313px;width:1042px;height:175px;border:5px solid #ec4419;box-sizing:border-box"></div>
<div class="t" style="left:679px;top:1334.14px;font-size:31.5px;color:#2a2a2f;font-weight:400;letter-spacing:0.581px;-webkit-text-stroke:0.5px #2a2a2f">Allowed origins</div>
<svg style="position:absolute;left:915px;top:1331px" width="39" height="39" viewBox="0 0 39 39"><circle cx="19.5" cy="19.5" r="18.57375" fill="none" stroke="#8e8e92" stroke-width="1.95"/><circle cx="19.695" cy="12.674999999999999" r="2.6325000000000003" fill="#8e8e94"/><path d="M15.989999999999998 16.8675 H21.45 V25.349999999999998 H23.3025 V28.5675 H15.794999999999998 V25.349999999999998 H17.55 V20.085 H15.989999999999998 Z" fill="#8e8e94"/></svg>
<div style="left:679px;top:1389px;width:1005px;height:78px;border:2px solid #b8b8bc;border-radius:11px;box-sizing:border-box;background:#fff"></div>
<div class="t" style="left:709px;top:1411.14px;font-size:31.5px;color:#b4b4b8;font-weight:400;letter-spacing:0.016px;">my-domain.com, *.demo.com</div>
<div style="left:1593px;top:1398px;width:2px;height:60px;background:#b8b8bc"></div>
<svg style="position:absolute;left:1622px;top:1415px" width="34" height="34" viewBox="0 0 34 34"><path d="M15.0 2.5 H5.0 A3.0 3.0 0 0 0 2.0 5.5 V29.0 A3.0 3.0 0 0 0 5.0 32.0 H29.0 A3.0 3.0 0 0 0 32.0 29.0 V19.0" fill="none" stroke="#8e8e92" stroke-width="3.8" stroke-linecap="round"/><path d="M13.0 21.0 L29.0 5.0" stroke="#8e8e92" stroke-width="3.8" stroke-linecap="round"/><circle cx="31.6" cy="2.9" r="1.9" fill="#8e8e92"/></svg>
<div class="t" style="left:679px;top:1505.64px;font-size:31.5px;color:#2a2a2f;font-weight:400;letter-spacing:0.081px;-webkit-text-stroke:0.5px #2a2a2f">IP filter type</div>
<div style="left:679px;top:1561px;width:1005px;height:78px;border:2px solid #b8b8bc;border-radius:11px;box-sizing:border-box;background:#fff"></div>
<div class="t" style="left:705px;top:1584.97px;font-size:31.7px;color:#76767a;font-weight:400;letter-spacing:0.024px;">IP Addresses</div>
<svg style="position:absolute;left:1628px;top:1590px" width="30" height="19" viewBox="0 0 30 19"><path d="M3 3 L15 15 L27 3" fill="none" stroke="#9b4dff" stroke-width="4" stroke-linecap="round" stroke-linejoin="round"/></svg>
<div class="t" style="left:679px;top:1678.14px;font-size:31.5px;color:#2a2a2f;font-weight:400;letter-spacing:-0.150px;-webkit-text-stroke:0.5px #2a2a2f">Allowed IP addresses</div>
<svg style="position:absolute;left:996px;top:1674px" width="39" height="39" viewBox="0 0 39 39"><circle cx="19.5" cy="19.5" r="18.57375" fill="none" stroke="#8e8e92" stroke-width="1.95"/><circle cx="19.695" cy="12.674999999999999" r="2.6325000000000003" fill="#8e8e94"/><path d="M15.989999999999998 16.8675 H21.45 V25.349999999999998 H23.3025 V28.5675 H15.794999999999998 V25.349999999999998 H17.55 V20.085 H15.989999999999998 Z" fill="#8e8e94"/></svg>
<div style="left:679px;top:1733px;width:1005px;height:78px;border:2px solid #b8b8bc;border-radius:11px;box-sizing:border-box;background:#fff"></div>
<div style="left:1593px;top:1742px;width:2px;height:60px;background:#b8b8bc"></div>
<svg style="position:absolute;left:1622px;top:1759px" width="34" height="34" viewBox="0 0 34 34"><path d="M15.0 2.5 H5.0 A3.0 3.0 0 0 0 2.0 5.5 V29.0 A3.0 3.0 0 0 0 5.0 32.0 H29.0 A3.0 3.0 0 0 0 32.0 29.0 V19.0" fill="none" stroke="#8e8e92" stroke-width="3.8" stroke-linecap="round"/><path d="M13.0 21.0 L29.0 5.0" stroke="#8e8e92" stroke-width="3.8" stroke-linecap="round"/><circle cx="31.6" cy="2.9" r="1.9" fill="#8e8e92"/></svg>
<svg style="position:absolute;left:701px;top:1750px" width="432" height="32" viewBox="0 0 432 32"><rect x="0" y="0" width="16" height="16" fill="rgb(244,244,244)"/><rect x="16" y="0" width="16" height="16" fill="rgb(240,240,240)"/><rect x="32" y="0" width="16" height="16" fill="rgb(248,248,248)"/><rect x="48" y="0" width="16" height="16" fill="rgb(232,232,232)"/><rect x="64" y="0" width="16" height="16" fill="rgb(236,236,236)"/><rect x="80" y="0" width="16" height="16" fill="rgb(236,236,236)"/><rect x="96" y="0" width="16" height="16" fill="rgb(228,228,228)"/><rect x="112" y="0" width="16" height="16" fill="rgb(250,250,250)"/><rect x="128" y="0" width="16" height="16" fill="rgb(236,236,236)"/><rect x="144" y="0" width="16" height="16" fill="rgb(244,244,244)"/><rect x="160" y="0" width="16" height="16" fill="rgb(250,250,250)"/><rect x="176" y="0" width="16" height="16" fill="rgb(236,236,236)"/><rect x="192" y="0" width="16" height="16" fill="rgb(252,252,252)"/><rect x="208" y="0" width="16" height="16" fill="rgb(252,252,252)"/><rect x="224" y="0" width="16" height="16" fill="rgb(236,236,236)"/><rect x="240" y="0" width="16" height="16" fill="rgb(236,236,236)"/><rect x="256" y="0" width="16" height="16" fill="rgb(248,248,248)"/><rect x="272" y="0" width="16" height="16" fill="rgb(248,248,248)"/><rect x="288" y="0" width="16" height="16" fill="rgb(236,236,236)"/><rect x="304" y="0" width="16" height="16" fill="rgb(252,252,252)"/><rect x="320" y="0" width="16" height="16" fill="rgb(236,236,236)"/><rect x="336" y="0" width="16" height="16" fill="rgb(250,250,250)"/><rect x="352" y="0" width="16" height="16" fill="rgb(248,248,248)"/><rect x="368" y="0" width="16" height="16" fill="rgb(236,236,236)"/><rect x="384" y="0" width="16" height="16" fill="rgb(228,228,228)"/><rect x="400" y="0" width="16" height="16" fill="rgb(250,250,250)"/><rect x="416" y="0" width="16" height="16" fill="rgb(236,236,236)"/><rect x="0" y="16" width="16" height="16" fill="rgb(240,240,240)"/><rect x="16" y="16" width="16" height="16" fill="rgb(232,232,232)"/><rect x="32" y="16" width="16" height="16" fill="rgb(232,232,232)"/><rect x="48" y="16" width="16" height="16" fill="rgb(250,250,250)"/><rect x="64" y="16" width="16" height="16" fill="rgb(236,236,236)"/><rect x="80" y="16" width="16" height="16" fill="rgb(250,250,250)"/><rect x="96" y="16" width="16" height="16" fill="rgb(250,250,250)"/><rect x="112" y="16" width="16" height="16" fill="rgb(248,248,248)"/><rect x="128" y="16" width="16" height="16" fill="rgb(236,236,236)"/><rect x="144" y="16" width="16" height="16" fill="rgb(240,240,240)"/><rect x="160" y="16" width="16" height="16" fill="rgb(236,236,236)"/><rect x="176" y="16" width="16" height="16" fill="rgb(250,250,250)"/><rect x="192" y="16" width="16" height="16" fill="rgb(252,252,252)"/><rect x="208" y="16" width="16" height="16" fill="rgb(252,252,252)"/><rect x="224" y="16" width="16" height="16" fill="rgb(244,244,244)"/><rect x="240" y="16" width="16" height="16" fill="rgb(248,248,248)"/><rect x="256" y="16" width="16" height="16" fill="rgb(240,240,240)"/><rect x="272" y="16" width="16" height="16" fill="rgb(250,250,250)"/><rect x="288" y="16" width="16" height="16" fill="rgb(236,236,236)"/><rect x="304" y="16" width="16" height="16" fill="rgb(252,252,252)"/><rect x="320" y="16" width="16" height="16" fill="rgb(244,244,244)"/><rect x="336" y="16" width="16" height="16" fill="rgb(250,250,250)"/><rect x="352" y="16" width="16" height="16" fill="rgb(228,228,228)"/><rect x="368" y="16" width="16" height="16" fill="rgb(232,232,232)"/><rect x="384" y="16" width="16" height="16" fill="rgb(240,240,240)"/><rect x="400" y="16" width="16" height="16" fill="rgb(236,236,236)"/><rect x="416" y="16" width="16" height="16" fill="rgb(250,250,250)"/></svg>
<div class="t" style="left:679px;top:1866.14px;font-size:31.5px;color:#2a2a2f;font-weight:400;letter-spacing:-0.299px;-webkit-text-stroke:0.5px #2a2a2f">Secure viewer</div>
<div style="left:1601px;top:1890px;width:84px;height:48px;background:#939397;border-radius:24px"></div>
<div style="left:1608px;top:1897.2px;width:33.5px;height:33.5px;background:#fff;border-radius:50%"></div>
<div class="t" style="left:679px;top:1928.14px;font-size:31.5px;color:#76767a;font-weight:400;letter-spacing:-0.015px;">Require a <span style="color:#9a44f2;-webkit-text-stroke:0.45px #9a44f2">subscribe token</span> to view the stream.</div>
<div style="left:679px;top:2000px;width:1006px;height:8px;background:#f0f0f0"></div>
<div class="t" style="left:679px;top:2047.14px;font-size:31.5px;color:#2a2a2f;font-weight:400;letter-spacing:0.490px;-webkit-text-stroke:0.5px #2a2a2f">Geo-blocking</div>
<div style="left:1601px;top:2068px;width:84px;height:48px;background:#939397;border-radius:24px"></div>
<div style="left:1608px;top:2075.2px;width:33.5px;height:33.5px;background:#fff;border-radius:50%"></div>
<div class="t" style="left:679px;top:2104.88px;font-size:31.8px;color:#76767a;font-weight:400;letter-spacing:-0.004px;">Enable publishing streams by country.</div>
<div style="left:636px;top:2266px;width:48px;height:48px;border-radius:50%;background:#fff"></div>
<div style="left:1777px;top:1208px;width:1127px;height:1028px;background:#fff;border-radius:26px"></div>
<div class="t" style="left:1838px;top:1247.09px;font-size:41px;color:#2a2a2f;font-weight:400;letter-spacing:-0.594px;">Settings</div>
<div class="t" style="left:1838px;top:1334.14px;font-size:31.5px;color:#2a2a2f;font-weight:400;letter-spacing:-0.769px;-webkit-text-stroke:0.5px #2a2a2f">Record</div>
<div style="left:2760px;top:1356px;width:84px;height:48px;background:#939397;border-radius:24px"></div>
<div style="left:2767px;top:1363.2px;width:33.5px;height:33.5px;background:#fff;border-radius:50%"></div>
<div class="t" style="left:1838px;top:1392.71px;font-size:32px;color:#76767a;font-weight:400;letter-spacing:-0.010px;">Enable recording for this token.</div>
<div style="left:1838px;top:1464px;width:1006px;height:8px;background:#f0f0f0"></div>
<div class="t" style="left:1838px;top:1509.14px;font-size:31.5px;color:#2a2a2f;font-weight:400;letter-spacing:-0.478px;-webkit-text-stroke:0.5px #2a2a2f">Token status</div>
<div style="left:2760px;top:1532px;width:84px;height:48px;background:#4fb46b;border-radius:24px"></div>
<div style="left:2803.0px;top:1539.2px;width:33.5px;height:33.5px;background:#fff;border-radius:50%"></div>
<div class="t" style="left:1838px;top:1568.71px;font-size:32px;color:#76767a;font-weight:400;letter-spacing:-0.022px;">Enable or disable your publish token.</div>
<div style="left:1838px;top:1640px;width:1006px;height:8px;background:#f0f0f0"></div>
<div class="t" style="left:1838px;top:1686.14px;font-size:31.5px;color:#2a2a2f;font-weight:400;letter-spacing:0.194px;-webkit-text-stroke:0.5px #2a2a2f">Multisource</div>
<div style="left:2760px;top:1710px;width:84px;height:48px;background:#4fb46b;border-radius:24px"></div>
<div style="left:2803.0px;top:1717.2px;width:33.5px;height:33.5px;background:#fff;border-radius:50%"></div>
<div class="t" style="left:1838px;top:1748.63px;font-size:32.1px;color:#76767a;font-weight:400;letter-spacing:0.029px;">Allow multiple <span style="color:#9a44f2;-webkit-text-stroke:0.45px #9a44f2">input streams</span>.</div>
<div style="left:1838px;top:1828px;width:1006px;height:8px;background:#f0f0f0"></div>
<div class="t" style="left:1838px;top:1875.14px;font-size:31.5px;color:#2a2a2f;font-weight:400;letter-spacing:0.040px;-webkit-text-stroke:0.5px #2a2a2f">Thumbnail previews</div>
<svg style="position:absolute;left:2136px;top:1870px" width="39" height="39" viewBox="0 0 39 39"><circle cx="19.5" cy="19.5" r="18.57375" fill="none" stroke="#8e8e92" stroke-width="1.95"/><circle cx="19.695" cy="12.674999999999999" r="2.6325000000000003" fill="#8e8e94"/><path d="M15.989999999999998 16.8675 H21.45 V25.349999999999998 H23.3025 V28.5675 H15.794999999999998 V25.349999999999998 H17.55 V20.085 H15.989999999999998 Z" fill="#8e8e94"/></svg>
<div style="left:2760px;top:1922px;width:84px;height:48px;background:#939397;border-radius:24px"></div>
<div style="left:2767px;top:1929.2px;width:33.5px;height:33.5px;background:#fff;border-radius:50%"></div>
<div class="t" style="left:1838px;top:1936.97px;font-size:31.7px;color:#76767a;font-weight:400;letter-spacing:0.000px;">Enable a <span style="color:#9a44f2;-webkit-text-stroke:0.45px #9a44f2">thumbnail</span> to be generated every 30 seconds via</div>
<div class="t" style="left:1838px;top:1984.97px;font-size:31.7px;color:#76767a;font-weight:400;">webhook.</div>
<div class="t" style="left:1838px;top:2070.14px;font-size:31.5px;color:#2a2a2f;font-weight:400;letter-spacing:0.247px;-webkit-text-stroke:0.5px #2a2a2f">Cluster region</div>
<svg style="position:absolute;left:2054px;top:2066px" width="39" height="39" viewBox="0 0 39 39"><circle cx="19.5" cy="19.5" r="18.57375" fill="none" stroke="#8e8e92" stroke-width="1.95"/><circle cx="19.695" cy="12.674999999999999" r="2.6325000000000003" fill="#8e8e94"/><path d="M15.989999999999998 16.8675 H21.45 V25.349999999999998 H23.3025 V28.5675 H15.794999999999998 V25.349999999999998 H17.55 V20.085 H15.989999999999998 Z" fill="#8e8e94"/></svg>
<div style="left:1838px;top:2125px;width:1006px;height:78px;border:2px solid #b8b8bc;border-radius:11px;box-sizing:border-box;background:#fff"></div>
<div class="t" style="left:1864px;top:2147.71px;font-size:32px;color:#76767a;font-weight:400;letter-spacing:0.275px;">Use account default</div>
<svg style="position:absolute;left:2787px;top:2154px" width="30" height="19" viewBox="0 0 30 19"><path d="M3 3 L15 15 L27 3" fill="none" stroke="#9b4dff" stroke-width="4" stroke-linecap="round" stroke-linejoin="round"/></svg>
</body></html>
